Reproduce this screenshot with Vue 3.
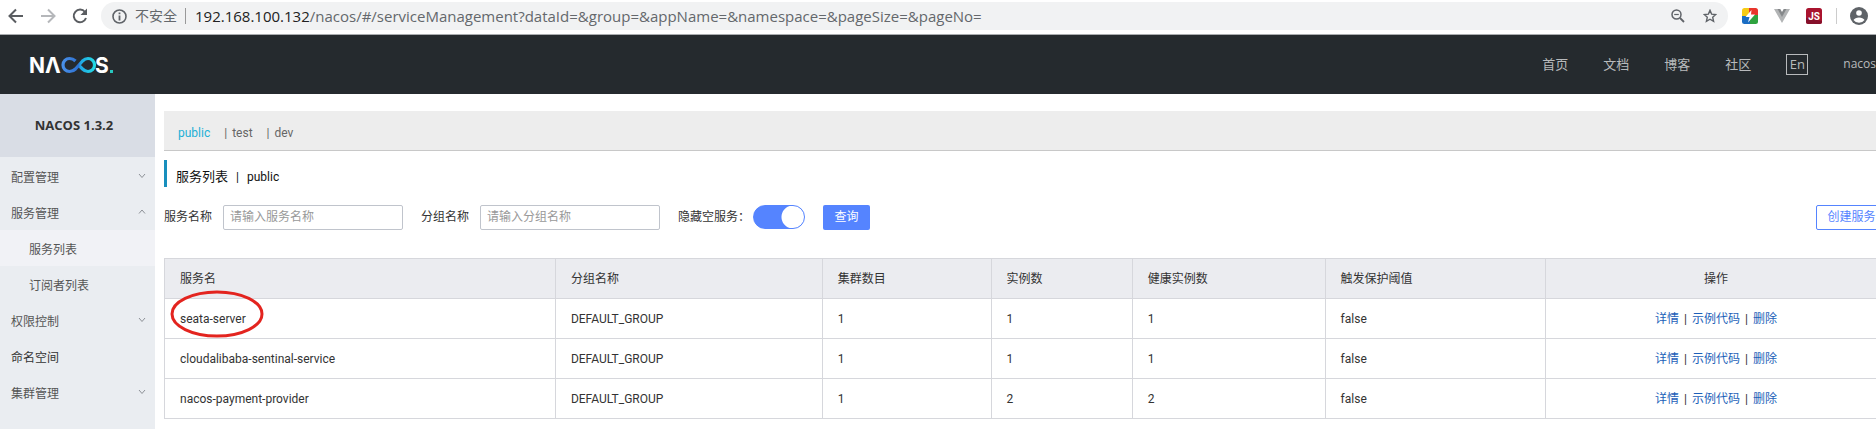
<script setup>
import { ref } from 'vue'

const links = ['首页', '文档', '博客', '社区']
const menu = [
  { label: '配置管理', arrow: 'down' },
  { label: '服务管理', arrow: 'up' },
  { label: '服务列表', sub: true, active: true },
  { label: '订阅者列表', sub: true },
  { label: '权限控制', arrow: 'down' },
  { label: '命名空间', dark: true },
  { label: '集群管理', arrow: 'down' },
]
const namespaces = ['public', 'test', 'dev']
const columns = ['服务名', '分组名称', '集群数目', '实例数', '健康实例数', '触发保护阈值', '操作']
const services = [
  { name: 'seata-server', group: 'DEFAULT_GROUP', clusters: 1, count: 1, healthy: 1, flag: 'false', marked: true },
  { name: 'cloudalibaba-sentinal-service', group: 'DEFAULT_GROUP', clusters: 1, count: 1, healthy: 1, flag: 'false' },
  { name: 'nacos-payment-provider', group: 'DEFAULT_GROUP', clusters: 1, count: 2, healthy: 2, flag: 'false' },
]
const hideEmpty = ref(true)
const serviceName = ref('')
const groupName = ref('')
</script>

<template>
  <div class="window">
    <div class="browser">
      <div class="nav-buttons">
        <button aria-label="Back"><svg width="16" height="16" viewBox="0 0 16 16" fill="none" stroke="#5a5d61" stroke-width="2"><path d="M15 8H2M8 1.5L1.5 8L8 14.5" /></svg></button>
        <button aria-label="Forward"><svg width="16" height="16" viewBox="0 0 16 16" fill="none" stroke="#b5b7ba" stroke-width="2"><path d="M1 8H14M8 1.5L14.5 8L8 14.5" /></svg></button>
        <button aria-label="Reload"><svg width="16" height="16" viewBox="0 0 16 16"><path d="M13 4A6.3 6.3 0 1 0 14 10" fill="none" stroke="#5a5d61" stroke-width="2" /><path d="M15 0.5V7H8.5Z" fill="#5a5d61" /></svg></button>
      </div>
      <div class="address">
        <svg width="15" height="15" viewBox="0 0 15 15"><circle cx="7.5" cy="7.5" r="6.5" fill="none" stroke="#5f6368" stroke-width="1.6" /><path d="M6.6 6.5h1.8V11.5H6.6zM6.6 3.6h1.8v1.7H6.6z" fill="#5f6368" /></svg>
        <span class="insecure">不安全</span>
        <span class="url"><b>192.168.100.132</b>/nacos/#/serviceManagement?dataId=&amp;group=&amp;appName=&amp;namespace=&amp;pageSize=&amp;pageNo=</span>
        <button class="zoom" aria-label="Zoom"><svg width="14" height="14" viewBox="0 0 14 14" fill="none" stroke="#5f6368"><circle cx="5.5" cy="5.5" r="4.5" stroke-width="1.5" /><path d="M9 9L13 13" stroke-width="1.8" /><path d="M3.2 5.5H7.8" stroke-width="1.2" /></svg></button>
        <button aria-label="Bookmark"><svg width="14" height="14" viewBox="0 0 14 14" fill="none" stroke="#5f6368" stroke-width="1.4"><path d="M7 1.3L8.6 5.1L12.8 5.5L9.7 8.3L10.6 12.4L7 10.2L3.4 12.4L4.3 8.3L1.2 5.5L5.4 5.1Z" /></svg></button>
      </div>
      <div class="extensions">
        <svg width="16" height="16" viewBox="0 0 16 16"><clipPath id="tile"><rect width="16" height="16" rx="2.5" /></clipPath><g clip-path="url(#tile)"><path d="M0 0H8V8H0Z" fill="#f6cb16" /><path d="M7 0H16V8H7Z" fill="#e8352c" /><path d="M0 8H8V16H0Z" fill="#1a6dc4" /><path d="M8 7H16V16H8Z" fill="#2fa33f" /></g><path d="M9.5 2L3.5 9H7.5L6 14.5L13 6.5H9Z" fill="#fff" /></svg>
        <svg width="16" height="14" viewBox="0 0 16 14"><path d="M0 0H4L8 7L12 0H16L8 14Z" fill="#b2b4b5" /><path d="M3.5 0H6.3L8 3L9.7 0H12.5L8 8Z" fill="#85888a" /></svg>
        <svg width="16" height="16" viewBox="0 0 16 16"><rect width="16" height="16" rx="2.5" fill="#a9142f" /><path d="M0 10L16 13V14Q16 16 13.500 16H2.500Q0 16 0 13.500Z" fill="#85102a" /><text x="8" y="12" text-anchor="middle" font-family="Roboto, sans-serif" font-weight="700" font-size="10" fill="#fff">JS</text></svg>
        <i class="rule"></i>
        <svg width="18" height="18" viewBox="0 0 18 18"><circle cx="9" cy="9" r="9" fill="#5f6368" /><circle cx="9" cy="6" r="2.8" fill="#fff" /><path d="M3.5 13Q5 10.500 9 10.500T14.500 13Q12.500 15.800 9 15.800T3.500 13Z" fill="#fff" /></svg>
      </div>
    </div>

    <header class="topbar">
      <a href="#" class="logo" aria-label="NACOS">
        <svg width="88" height="30" viewBox="-2 -6 88 30">
          <defs><linearGradient id="loop" gradientUnits="userSpaceOnUse" x1="32" x2="66" y1="0" y2="0"><stop offset="0" stop-color="#4a91e8" /><stop offset="0.48" stop-color="#2d70d2" /><stop offset="0.55" stop-color="#20a8e4" /><stop offset="1" stop-color="#23dfe4" /></linearGradient></defs>
          <g fill="#fff" font-family="Inter, sans-serif" font-weight="700" font-size="21"><text x="-1" y="17">N</text><text x="15" y="17">Λ</text><text x="65" y="17">S</text></g>
          <path d="M45.500 5Q43 2.500 39.500 2.500A6.500 6.500 0 0 0 39.500 15.500Q43 15.500 45.500 13L52.500 5Q55 2.500 58 2.500A6.500 6.500 0 0 1 58 15.500Q55 15.500 52.500 13L49 9.500" fill="none" stroke="url(#loop)" stroke-width="3.2" />
          <rect x="80" y="14" width="3" height="3" fill="#28c7bf" />
        </svg>
      </a>
      <nav>
        <a v-for="link in links" :key="link" href="#">{{ link }}</a>
        <button class="lang">En</button>
        <a href="#" class="user">nacos</a>
      </nav>
    </header>

    <div class="body">
      <aside>
        <h1>NACOS 1.3.2</h1>
        <ul>
          <li v-for="item in menu" :key="item.label">
            <a href="#" :class="{ sub: item.sub, active: item.active, dark: item.dark }">
              {{ item.label }}
              <svg v-if="item.arrow" width="8" height="6" viewBox="0 0 8 6" fill="none" stroke="#8d9197"><path :d="item.arrow === 'down' ? 'M1 1L4 4.500L7 1' : 'M1 4.500L4 1L7 4.500'" /></svg>
            </a>
          </li>
        </ul>
      </aside>

      <main>
        <div class="namespaces">
          <template v-for="(space, i) in namespaces" :key="space">
            <span v-if="i" class="bar">|</span><a href="#" :class="{ current: i === 0 }">{{ space }}</a>
          </template>
        </div>
        <h2><span class="heading">服务列表</span><span class="split">|</span><span>public</span></h2>
        <form @submit.prevent>
          <label for="service">服务名称</label>
          <input id="service" v-model="serviceName" type="text" placeholder="请输入服务名称">
          <label for="group">分组名称</label>
          <input id="group" v-model="groupName" type="text" placeholder="请输入分组名称">
          <label for="hide" class="hide-label">隐藏空服务：</label>
          <input id="hide" v-model="hideEmpty" type="checkbox" class="switch">
          <button type="submit" class="query">查询</button>
          <button type="button" class="create">创建服务</button>
        </form>
        <table>
          <colgroup><col class="c1"><col class="c2"><col class="c3"><col class="c4"><col class="c5"><col class="c6"><col></colgroup>
          <thead><tr><th v-for="column in columns" :key="column">{{ column }}</th></tr></thead>
          <tbody>
            <tr v-for="row in services" :key="row.name">
              <td>{{ row.name }}<svg v-if="row.marked" class="mark" width="94" height="48" viewBox="0 0 94 48"><ellipse cx="47" cy="24" rx="45" ry="22" fill="none" stroke="#e3241f" stroke-width="3" /></svg></td>
              <td>{{ row.group }}</td>
              <td>{{ row.clusters }}</td>
              <td>{{ row.count }}</td>
              <td>{{ row.healthy }}</td>
              <td>{{ row.flag }}</td>
              <td><a href="#">详情</a><i>|</i><a href="#">示例代码</a><i>|</i><a href="#">删除</a></td>
            </tr>
          </tbody>
        </table>
      </main>
    </div>
  </div>
</template>

<style>
body { margin: 0; background: #fff; }
</style>

<style scoped>
* { box-sizing: border-box; }
.window { display: flex; flex-direction: column; min-height: 100vh; overflow: hidden; font: 12px/18px Roboto, "Noto Sans CJK SC", sans-serif; color: #333; }
a { color: inherit; text-decoration: none; }
button { padding: 0; border: 0; background: none; font: inherit; color: inherit; }
svg { display: block; flex: none; }
i { font-style: normal; }

.browser { display: flex; align-items: flex-start; height: 35px; padding: 2px 8px 0; border-bottom: 1px solid #a9acaf; }
.nav-buttons { display: flex; align-items: center; gap: 16px; height: 28px; width: 93px; }
.address { flex: 1; min-width: 0; display: flex; align-items: center; height: 28px; padding: 0 11px; border-radius: 14px; background: #f1f2f3; color: #64686c; white-space: nowrap; }
.insecure { margin: 0 8px; font-size: 14px; }
.url { padding-left: 9px; border-left: 1px solid #999; font-family: "Open Sans", sans-serif; font-size: 15px; line-height: 16px; }
.url b { font-weight: 400; color: #222; }
.zoom { margin: 0 18px 0 auto; }
.extensions { display: flex; align-items: center; gap: 16px; height: 28px; padding-left: 14px; }
.extensions .rule { width: 1px; height: 16px; margin: 0 -3px 0 -2px; background: #ccc; }

.topbar { display: flex; align-items: center; justify-content: space-between; height: 59px; padding-left: 28px; background: #252a2e; color: #b8babc; }
.topbar nav { display: flex; align-items: center; gap: 35px; padding-bottom: 1px; font-family: "Open Sans", "Noto Sans CJK SC", sans-serif; font-size: 13px; }
.lang { width: 22px; height: 21px; border: 1px solid #b8babc; line-height: 18px; }
.topbar .user { font-size: 12px; }

.body { display: flex; flex: 1; }
aside { flex: none; width: 155px; background: #eaedf1; }
h1 { margin: 0 0 1px; padding-right: 7px; background: #d9dde5; font: 700 13px/63px "Open Sans", sans-serif; text-align: center; }
ul { margin: 0; padding: 0; list-style: none; }
li a { display: flex; justify-content: space-between; height: 36px; padding: 2px 9px 0 11px; line-height: 36px; color: #555; }
li svg { margin-top: 13px; }
li .sub { padding-left: 29px; }
li .active { background: #f1f2f6; }
li .dark { color: #333; }

main { flex: 1; min-width: 0; padding: 17px 0 0 9px; margin-right: -11px; }
.namespaces { display: flex; align-items: center; height: 40px; padding: 4px 14px 0; border-bottom: 1px solid #c8c8c8; background: #ededed; color: #666; }
.namespaces .current { color: #22b0d6; }
.bar { margin: 0 5px 0 14px; }
h2 { display: flex; align-items: center; margin: 9px 0 18px; padding-left: 9px; border-left: 3px solid #188fbd; height: 27px; padding-top: 7px; font-weight: 400; font-size: 12px; color: #111; }
.heading { font-size: 13px; }
.split { margin: 0 8px; }
form { display: flex; height: 25px; margin-bottom: 28px; line-height: 25px; }
label { margin-right: 11px; }
input[type="text"] { width: 180px; height: 25px; margin: 0 18px 0 0; padding: 0 6px; border: 1px solid #c0c4cc; border-radius: 2px; background: #fff; font: inherit; color: #333; }
input::placeholder { color: #999; opacity: 1; }
.hide-label { width: 72px; margin: 0 3px 0 0; white-space: nowrap; }
.switch { appearance: none; width: 52px; height: 24px; margin: 0 18px 0 0; padding: 0; border: 1px solid #5584ff; border-radius: 12px; background: #fff; }
.switch:checked { background: radial-gradient(circle at 39px 11px, #fff 11px, #5584ff 12px); }
.query { width: 47px; border-radius: 2px; background: #5584ff; color: #fff; }
.create { width: 71px; margin-left: auto; border: 1px solid #5584ff; border-radius: 2px; line-height: 23px; color: #5584ff; }

table { width: 100%; table-layout: fixed; border-collapse: collapse; border: 1px solid #d6d7dc; }
.c1 { width: 22.7%; }
.c2 { width: 15.5%; }
.c3 { width: 9.8%; }
.c4 { width: 8.2%; }
.c5 { width: 11.2%; }
.c6 { width: 12.8%; }
th, td { height: 40px; padding: 0 15px; border: 1px solid #d6d7dc; font-weight: 400; text-align: left; white-space: nowrap; }
th { background: #ebecf0; }
th:last-child, td:last-child { text-align: center; }
td { position: relative; }
td a { color: #1c5fb8; }
td i { margin: 0 5px; }
.mark { position: absolute; left: 5px; top: -9px; z-index: 1; }
</style>
